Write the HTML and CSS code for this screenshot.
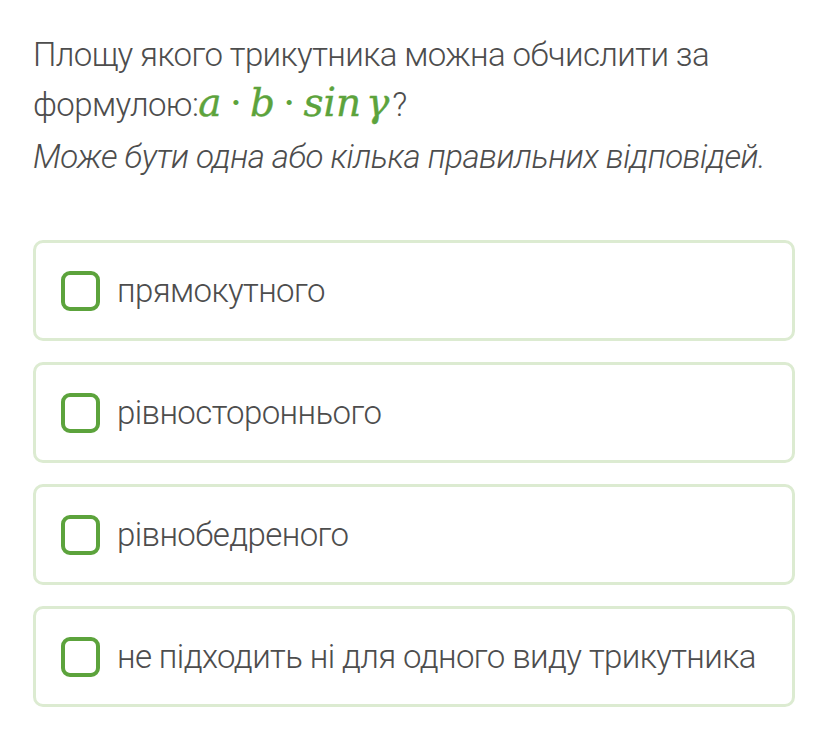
FILE: index.html
```html
<!DOCTYPE html>
<html lang="uk">
<head>
<meta charset="utf-8">
<link rel="stylesheet" href="styles.css">
</head>
<body>
<main class="quiz">
  <div class="question">
    <p class="q-text">Площу якого трикутника можна обчислити за формулою:<span class="math">a<span class="op">·</span>b<span class="op">·</span>sin<span class="sp"></span>γ</span>?</p>
    <p class="q-hint">Може бути одна або кілька правильних відповідей.</p>
  </div>
  <ul class="options">
    <li class="option"><span class="check"></span><span class="label">прямокутного</span></li>
    <li class="option"><span class="check"></span><span class="label">рівностороннього</span></li>
    <li class="option"><span class="check"></span><span class="label">рівнобедреного</span></li>
    <li class="option"><span class="check"></span><span class="label">не підходить ні для одного виду трикутника</span></li>
  </ul>
</main>
</body>
</html>
```
FILE: styles.css
```css
* { box-sizing: border-box; }
html, body { margin: 0; padding: 0; background: #fff; }
body {
  font-family: Roboto, "Noto Sans", sans-serif;
  color: #4d4d4d;
}
.quiz {
  padding: 30px 33px 0 33px;
}
.question p { margin: 0; }
.q-text {
  font-size: 33px;
  font-weight: 300;
  letter-spacing: -0.6px;
  line-height: 50px;
}
.math {
  font-family: "DejaVu Serif", "Liberation Serif", serif;
  font-style: italic;
  font-weight: normal;
  color: #5ca33c;
  font-size: 39px;
  line-height: 1;
  letter-spacing: 0;
  -webkit-text-stroke: 0.4px #5ca33c;
  margin-left: 0;
  margin-right: 3px;
}
.op {
  font-style: normal;
  display: inline-block;
  padding: 0 8px;
  -webkit-text-stroke: 0;
}
.sp {
  display: inline-block;
  width: 5px;
}
.q-hint {
  font-size: 33px;
  font-weight: 300;
  font-style: italic;
  letter-spacing: -0.5px;
  line-height: 54px;
}
.options {
  list-style: none;
  margin: 56px 0 0 0;
  padding: 0;
  display: flex;
  flex-direction: column;
  gap: 21px;
}
.option {
  height: 101px;
  border: 3px solid #dcebd1;
  border-radius: 10px;
  display: flex;
  align-items: center;
  padding-left: 25px;
}
.check {
  width: 39px;
  height: 40px;
  border: 4px solid #5ca33c;
  border-radius: 9px;
  flex: none;
}
.label {
  margin-left: 17px;
  font-size: 33px;
  font-weight: 300;
  letter-spacing: -0.6px;
}
```
